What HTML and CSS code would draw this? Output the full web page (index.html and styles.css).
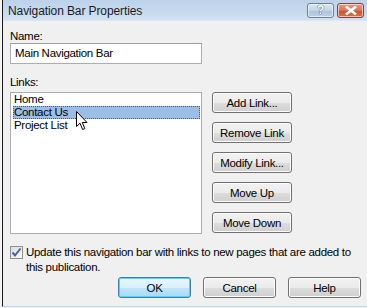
FILE: index.html
```html
<!DOCTYPE html>
<html lang="en">
<head>
    <meta charset="UTF-8">
    <title>Navigation Bar Properties</title>
    <link rel="stylesheet" href="styles.css">
</head>
<body>
<div class="frame">
    <!--title bar-->
    <div class="titlebar">
        <span class="title">Navigation Bar Properties</span>
        <div class="caption">
            <span class="cap-btn cap-help">?</span>
            <span class="cap-btn cap-close">
                <svg width="14" height="9" viewBox="0 0 14 9"><path d="M2 0.5 L12 8.5 M12 0.5 L2 8.5" stroke="#fff" stroke-width="2.6" fill="none"/></svg>
            </span>
        </div>
    </div>
    <div class="body">
        <div class="lbl">Name:</div>
        <div class="textbox">Main Navigation Bar</div>
        <div class="lbl links-lbl">Links:</div>
        <div class="links-row">
            <div class="listbox">
                <div class="item">Home</div>
                <div class="item sel">Contact Us</div>
                <div class="item">Project List</div>
            </div>
            <div class="side-btns">
                <button class="btn">Add Link...</button>
                <button class="btn">Remove Link</button>
                <button class="btn">Modify Link...</button>
                <button class="btn">Move Up</button>
                <button class="btn">Move Down</button>
            </div>
        </div>
        <div class="check-row">
            <span class="checkbox">
                <svg width="11" height="11" viewBox="0 0 11 11"><path d="M1.5 5.5 L4 8.5 L9.5 1.5" stroke="#4a5ea8" stroke-width="2" fill="none"/></svg>
            </span>
            <span class="check-text">Update this navigation bar with links to new pages that are added to this publication.</span>
        </div>
        <div class="footer">
            <button class="btn big default">OK</button>
            <button class="btn big">Cancel</button>
            <button class="btn big">Help</button>
        </div>
    </div>
    <svg class="pointer" width="13" height="20" viewBox="0 0 13 20"><path d="M0.5 0.5 L0.5 15.5 L4 12.2 L6.6 18.5 L8.8 17.6 L6.3 11.5 L11 11.5 Z" fill="#fff" stroke="#000" stroke-width="1"/></svg>
</div>
</body>
</html>
```

FILE: styles.css
```css
*{
    margin: 0;
    padding: 0;
    box-sizing: border-box;
}
body{
    width: 367px;
    height: 308px;
    overflow: hidden;
    background: #f4f4f4;
    font-family: "Liberation Sans", Arial, sans-serif;
    font-size: 11.5px;
    letter-spacing: -0.3px;
    color: #000;
}
.frame{
    position: relative;
    margin-left: 2px;
    height: 307px;
    border-left: 1px solid #1a1a1a;
    border-bottom: 1px solid #b9d1ea;
    background: #f0f0f0;
}
.titlebar{
    height: 21px;
    display: flex;
    align-items: center;
    justify-content: space-between;
    padding: 0 3px 0 5px;
    background: linear-gradient(#bcd2ea, #c7daef 60%, #d3e2f2);
    border-bottom: 1px solid #dbe7f4;
}
.title{
    font-size: 12px;
    letter-spacing: -0.1px;
    color: #1b1b1b;
    padding-top: 1px;
}
.caption{
    display: flex;
    gap: 3px;
}
.cap-btn{
    width: 27px;
    height: 15px;
    border: 1px solid #6e7f93;
    border-radius: 3px;
    display: flex;
    align-items: center;
    justify-content: center;
    box-shadow: inset 0 0 0 1px rgba(255,255,255,0.6);
}
.cap-help{
    background: linear-gradient(#d9e5f2, #c3d4e7 50%, #aec3da 51%, #bcd0e5);
    color: #fff;
    font-weight: bold;
    font-size: 12px;
    text-shadow: 0 0 1px #3b4d63, 0 0 1px #3b4d63;
}
.cap-close{
    border-color: #8c4030;
    background: linear-gradient(#e59c86, #d8735a 50%, #c8532f 51%, #d7704e);
}
.body{
    padding: 8px 6px 0 7px;
}
.lbl{
    line-height: 14px;
    color: #000;
}
.textbox{
    width: 192px;
    height: 21px;
    border: 1px solid #abadb3;
    border-top-color: #9a9ea6;
    background: #fff;
    line-height: 19px;
    padding-left: 4px;
}
.links-lbl{
    margin-top: 11px;
}
.links-row{
    display: flex;
    gap: 10px;
    margin-top: 3px;
}
.listbox{
    width: 192px;
    height: 142px;
    border: 1px solid #a9acb2;
    background: #fff;
    padding: 0 1px 0 2px;
}
.item{
    height: 13px;
    line-height: 13px;
    padding-left: 1px;
}
.item.sel{
    background: #9bbde6;
    outline: 1px dotted #8a4a1c;
    outline-offset: -1px;
}
.side-btns{
    display: flex;
    flex-direction: column;
    gap: 9px;
}
.btn{
    width: 80px;
    height: 21px;
    border: 1px solid #707070;
    border-radius: 3px;
    background: linear-gradient(#f2f2f2, #ebebeb 50%, #dddddd 51%, #cfcfcf);
    box-shadow: inset 0 0 0 1px #fcfcfc;
    font-family: "Liberation Sans", Arial, sans-serif;
    font-size: 11.5px;
    letter-spacing: -0.3px;
    color: #000;
}
.check-row{
    display: flex;
    gap: 3px;
    margin-top: 11px;
    line-height: 15px;
}
.checkbox{
    flex: none;
    width: 13px;
    height: 13px;
    margin-top: 1px;
    border: 1px solid #8f8f8f;
    background: linear-gradient(135deg, #dcdcdc, #fafafa);
    display: flex;
    align-items: center;
    justify-content: center;
}
.footer{
    display: flex;
    justify-content: flex-end;
    gap: 12px;
    margin-top: 2px;
}
.btn.big{
    width: 73px;
}
.btn.default{
    border-color: #3c7fb1;
    background: linear-gradient(#eaf6fd, #d9f0fc 50%, #bee6fd 51%, #a7d9f5);
    box-shadow: inset 0 0 0 1px #48d7fb;
}
.pointer{
    position: absolute;
    left: 73px;
    top: 111px;
}
```
